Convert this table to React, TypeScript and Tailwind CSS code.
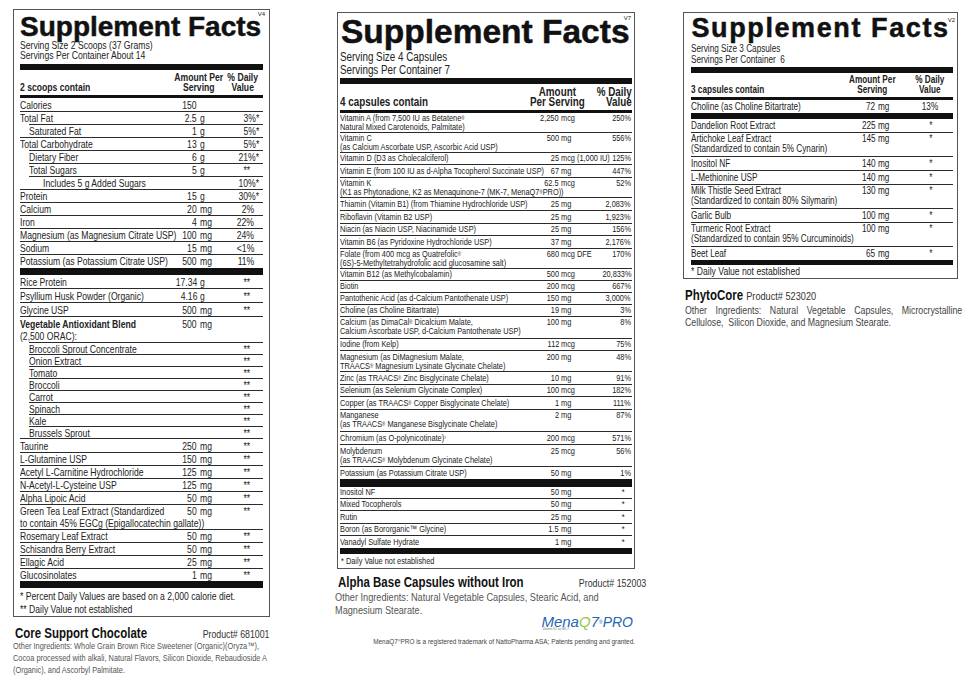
import type { ReactNode } from 'react'

const F = "font-['Liberation_Sans',Arial,sans-serif]"

// condensed text: Arial Narrow is not installed, so squeeze Liberation Sans
function T({ children, o = 'origin-left', className = '' }: { children: ReactNode; o?: string; className?: string }) {
  return <span className={`inline-block whitespace-nowrap scale-x-[0.82] ${o} ${className}`}>{children}</span>
}

function R({ c = '®' }: { c?: string }) {
  return <span className="text-[0.6em] align-top">{c}</span>
}

type Row = {
  n: ReactNode
  n2?: ReactNode
  a?: string
  u?: string
  dv?: string
  ind?: string
  tp?: string
  h?: string
  nb?: boolean
}

function lPad(dv: string) {
  if (dv === '**') return 'pr-[13px]'
  if (dv.endsWith('*')) return 'pr-[4px]'
  return 'pr-[9px]'
}

function LeftRow({ n, n2, a = '', u = '', dv = '', ind = '', tp = '', h = 'h-[12px]', nb }: Row) {
  return (
    <div className={`${ind} ${nb ? '' : 'border-t border-[#2b2b2b]'}`}>
      <div className={`flex items-center ${h} leading-[12px]`}>
        <div className={`flex-1 min-w-0 ${tp}`}><T>{n}</T></div>
        <div className="w-[28px] text-right"><T o="origin-right">{a}</T></div>
        <div className="w-[26px] pl-[3px]"><T>{u}</T></div>
        <div className={`w-[40px] text-right ${lPad(dv)}`}><T o="origin-right">{dv}</T></div>
      </div>
      {n2 && <div className="leading-[12px]"><T>{n2}</T></div>}
    </div>
  )
}

const left1: Row[] = [
  { n: 'Calories', a: '150', nb: true, h: 'h-[13px]' },
  { n: 'Total Fat', a: '2.5', u: 'g', dv: '3%*' },
  { n: 'Saturated Fat', a: '1', u: 'g', dv: '5%*', ind: 'ml-[9px]' },
  { n: 'Total Carbohydrate', a: '13', u: 'g', dv: '5%*' },
  { n: 'Dietary Fiber', a: '6', u: 'g', dv: '21%*', ind: 'ml-[9px]' },
  { n: 'Total Sugars', a: '5', u: 'g', dv: '**', ind: 'ml-[9px]' },
  { n: 'Includes 5 g Added Sugars', dv: '10%*', ind: 'ml-[9px]', tp: 'pl-[14px]' },
  { n: 'Protein', a: '15', u: 'g', dv: '30%*' },
  { n: 'Calcium', a: '20', u: 'mg', dv: '2%' },
  { n: 'Iron', a: '4', u: 'mg', dv: '22%' },
  { n: 'Magnesium (as Magnesium Citrate USP)', a: '100', u: 'mg', dv: '24%' },
  { n: 'Sodium', a: '15', u: 'mg', dv: '<1%' },
  { n: 'Potassium (as Potassium Citrate USP)', a: '500', u: 'mg', dv: '11%' },
]

const veg = ['Broccoli Sprout Concentrate', 'Onion Extract', 'Tomato', 'Broccoli', 'Carrot', 'Spinach', 'Kale', 'Brussels Sprout']

const left2: Row[] = [
  { n: 'Rice Protein', a: '17.34', u: 'g', dv: '**', nb: true, h: 'h-[13px]' },
  { n: 'Psyllium Husk Powder (Organic)', a: '4.16', u: 'g', dv: '**', h: 'h-[13px]' },
  { n: 'Glycine USP', a: '500', u: 'mg', dv: '**', h: 'h-[13px]' },
  { n: <span className="font-bold">Vegetable Antioxidant Blend</span>, n2: '(2,500 ORAC):', a: '500', u: 'mg', h: 'h-[13px]' },
  ...veg.map((v) => ({ n: v, dv: '**', ind: 'ml-[9px]', h: 'h-[11px]' })),
  { n: 'Taurine', a: '250', u: 'mg', dv: '**', h: 'h-[13px]' },
  { n: 'L-Glutamine USP', a: '150', u: 'mg', dv: '**' },
  { n: 'Acetyl L-Carnitine Hydrochloride', a: '125', u: 'mg', dv: '**' },
  { n: 'N-Acetyl-L-Cysteine USP', a: '125', u: 'mg', dv: '**' },
  { n: 'Alpha Lipoic Acid', a: '50', u: 'mg', dv: '**' },
  { n: 'Green Tea Leaf Extract (Standardized', n2: 'to contain 45% EGCg (Epigallocatechin gallate))', a: '50', u: 'mg', dv: '**' },
  { n: 'Rosemary Leaf Extract', a: '50', u: 'mg', dv: '**' },
  { n: 'Schisandra Berry Extract', a: '50', u: 'mg', dv: '**' },
  { n: 'Ellagic Acid', a: '25', u: 'mg', dv: '**' },
  { n: 'Glucosinolates', a: '1', u: 'mg', dv: '**' },
]

function LeftPanel() {
  return (
    <div className={`ml-[13px] mt-[9px] w-[257px] shrink-0 ${F}`}>
      <div className="relative border-[1.5px] border-[#555] px-[6px] text-[#222]">
        <span className="absolute right-[4px] top-[1px] text-[6px] leading-none">V4</span>
        <div className="pt-[4px] text-[28px] leading-[26px] font-bold text-[#111] whitespace-nowrap [-webkit-text-stroke:0.5px_#111]">Supplement Facts</div>
        <div className="text-[10.5px] leading-[10px]">
          <div><T>Serving Size 2 Scoops (37 Grams)</T></div>
          <div><T>Servings Per Container About 14</T></div>
        </div>
        <div className="mt-[4px] h-[6px] bg-[#111]" />
        <div className="flex items-end h-[25px] pb-[3px] text-[10.5px] leading-[10px] font-bold">
          <div className="flex-1"><T>2 scoops contain</T></div>
          <div className="w-[54px] pr-[3px] text-center"><T o="origin-center">Amount Per<br />Serving</T></div>
          <div className="w-[40px] text-center"><T o="origin-center">% Daily<br />Value</T></div>
        </div>
        <div className="h-[3px] bg-[#111]" />
        <div className="text-[10.5px]">
          {left1.map((r, i) => <LeftRow key={i} {...r} />)}
        </div>
        <div className="mt-[1px] h-[7px] bg-[#111]" />
        <div className="text-[10.5px]">
          {left2.map((r, i) => <LeftRow key={i} {...r} />)}
        </div>
        <div className="h-[7px] bg-[#111]" />
        <div className="text-[10.5px] leading-[13px] pt-[1.5px]">
          <div><T>* Percent Daily Values are based on a 2,000 calorie diet.</T></div>
          <div><T>** Daily Value not established</T></div>
        </div>
      </div>
      <div className="mt-[9px] flex items-baseline justify-between pl-[2px] pr-[1px] leading-[15px]">
        <T className="text-[14px] font-bold text-[#111]">Core Support Chocolate</T>
        <T o="origin-right" className="text-[10.7px] text-[#333]">Product# 681001</T>
      </div>
      <div className="-mt-[1.5px] text-[9px] leading-[12px] text-[#555]">
        <div><T>Other Ingredients: Whole Grain Brown Rice Sweetener (Organic)(Oryza™),</T></div>
        <div><T>Cocoa processed with alkali, Natural Flavors, Silicon Dioxide, Rebaudioside A</T></div>
        <div><T>(Organic), and Ascorbyl Palmitate.</T></div>
      </div>
    </div>
  )
}

function MidRow({ n, n2, a = '', u = '', dv = '', h = 'h-[12.5px]', nb }: Row) {
  const two = !!n2
  return (
    <div className={`${nb ? '' : 'border-t border-[#2b2b2b]'} ${two ? 'pt-[1.5px]' : ''} ${h}`}>
      <div className={`flex ${two ? 'leading-[9px]' : 'items-center h-full leading-[10px]'}`}>
        <div className="flex-1 min-w-0"><T>{n}</T></div>
        <div className="w-[40px] text-right"><T o="origin-right">{a}</T></div>
        <div className="w-[37px] pl-[2px]"><T>{u}</T></div>
        <div className={`w-[36px] text-right ${dv === '*' ? 'pr-[7px]' : 'pr-[1px]'}`}><T o="origin-right">{dv}</T></div>
      </div>
      {two && <div className="leading-[9px]"><T>{n2}</T></div>}
    </div>
  )
}

const mid1: Row[] = [
  { n: <>Vitamin A (from 7,500 IU as Betatene<R /></>, n2: 'Natural Mixed Carotenoids, Palmitate)', a: '2,250', u: 'mcg', dv: '250%', nb: true, h: 'h-[19px]' },
  { n: 'Vitamin C', n2: '(as Calcium Ascorbate USP, Ascorbic Acid USP)', a: '500', u: 'mg', dv: '556%', h: 'h-[20px]' },
  { n: 'Vitamin D (D3 as Cholecalciferol)', a: '25', u: 'mcg (1,000 IU)', dv: '125%' },
  { n: 'Vitamin E (from 100 IU as d-Alpha Tocopherol Succinate USP)', a: '67', u: 'mg', dv: '447%' },
  { n: 'Vitamin K', n2: <>(K1 as Phytonadione, K2 as Menaquinone-7 (MK-7, MenaQ7<R />PRO))</>, a: '62.5', u: 'mcg', dv: '52%', h: 'h-[20px]' },
  { n: 'Thiamin (Vitamin B1) (from Thiamine Hydrochloride USP)', a: '25', u: 'mg', dv: '2,083%', h: 'h-[13.5px]' },
  { n: 'Riboflavin (Vitamin B2 USP)', a: '25', u: 'mg', dv: '1,923%' },
  { n: 'Niacin (as Niacin USP, Niacinamide USP)', a: '25', u: 'mg', dv: '156%' },
  { n: 'Vitamin B6 (as Pyridoxine Hydrochloride USP)', a: '37', u: 'mg', dv: '2,176%' },
  { n: <>Folate (from 400 mcg as Quatrefolic<R /></>, n2: '(6S)-5-Methyltetrahydrofolic acid glucosamine salt)', a: '680', u: 'mcg DFE', dv: '170%', h: 'h-[20px]' },
  { n: 'Vitamin B12 (as Methylcobalamin)', a: '500', u: 'mcg', dv: '20,833%' },
  { n: 'Biotin', a: '200', u: 'mcg', dv: '667%', h: 'h-[11.5px]' },
  { n: 'Pantothenic Acid (as d-Calcium Pantothenate USP)', a: '150', u: 'mg', dv: '3,000%' },
  { n: 'Choline (as Choline Bitartrate)', a: '19', u: 'mg', dv: '3%', h: 'h-[11.5px]' },
  { n: <>Calcium (as DimaCal<R /> Dicalcium Malate,</>, n2: 'Calcium Ascorbate USP, d-Calcium Pantothenate USP)', a: '100', u: 'mg', dv: '8%', h: 'h-[22px]' },
  { n: 'Iodine (from Kelp)', a: '112', u: 'mcg', dv: '75%' },
  { n: 'Magnesium (as DiMagnesium Malate,', n2: <>TRAACS<R /> Magnesium Lysinate Glycinate Chelate)</>, a: '200', u: 'mg', dv: '48%', h: 'h-[21px]' },
  { n: <>Zinc (as TRAACS<R /> Zinc Bisglycinate Chelate)</>, a: '10', u: 'mg', dv: '91%' },
  { n: 'Selenium (as Selenium Glycinate Complex)', a: '100', u: 'mcg', dv: '182%' },
  { n: <>Copper (as TRAACS<R /> Copper Bisglycinate Chelate)</>, a: '1', u: 'mg', dv: '111%' },
  { n: 'Manganese', n2: <>(as TRAACS<R /> Manganese Bisglycinate Chelate)</>, a: '2', u: 'mg', dv: '87%', h: 'h-[22px]' },
  { n: <>Chromium (as O-polynicotinate)<R c="³" /></>, a: '200', u: 'mcg', dv: '571%', h: 'h-[13.5px]' },
  { n: 'Molybdenum', n2: <>(as TRAACS<R /> Molybdenum Glycinate Chelate)</>, a: '25', u: 'mcg', dv: '56%', h: 'h-[22px]' },
  { n: 'Potassium (as Potassium Citrate USP)', a: '50', u: 'mg', dv: '1%' },
]

const mid2: Row[] = [
  { n: 'Inositol NF', a: '50', u: 'mg', dv: '*', nb: true, h: 'h-[11px]' },
  { n: 'Mixed Tocopherols', a: '50', u: 'mg', dv: '*' },
  { n: 'Rutin', a: '25', u: 'mg', dv: '*' },
  { n: 'Boron (as Bororganic™ Glycine)', a: '1.5', u: 'mg', dv: '*' },
  { n: 'Vanadyl Sulfate Hydrate', a: '1', u: 'mg', dv: '*' },
]

function MidPanel() {
  return (
    <div className={`ml-[65px] mt-[12px] w-[301px] shrink-0 ${F}`}>
      <div className="relative ml-[2px] w-[298px] border-[1.5px] border-[#555] px-[2px] text-[#222]">
        <span className="absolute right-[3px] top-[2px] text-[6px] leading-none">V7</span>
        <div className="pt-[4px] pl-[1px] text-[33.5px] leading-[30px] font-bold text-[#111] whitespace-nowrap [-webkit-text-stroke:0.5px_#111]">Supplement Facts</div>
        <div className="mt-[4px] text-[12px] leading-[13px]">
          <div><T>Serving Size 4 Capsules</T></div>
          <div><T>Servings Per Container 7</T></div>
        </div>
        <div className="mt-[0.5px] h-[6px] bg-[#111]" />
        <div className="flex items-end h-[26px] pb-[3px] text-[12px] leading-[10px] font-bold">
          <div className="flex-1"><T>4 capsules contain</T></div>
          <div className="w-[62px] text-center"><T o="origin-center">Amount<br />Per Serving</T></div>
          <div className="w-[46px] text-right"><T o="origin-right">% Daily<br />Value</T></div>
        </div>
        <div className="h-[3px] bg-[#111]" />
        <div className="text-[9px]">
          {mid1.map((r, i) => <MidRow key={i} {...r} />)}
        </div>
        <div className="h-[8px] bg-[#111]" />
        <div className="text-[9px]">
          {mid2.map((r, i) => <MidRow key={i} {...r} />)}
        </div>
        <div className="h-[6px] bg-[#111]" />
        <div className="h-[14px] text-[9px] leading-[14px] pl-[1px]"><T>* Daily Value not established</T></div>
      </div>
      <div className="mt-[5px] flex items-baseline justify-between pl-[3px] pr-[1px] leading-[16px]">
        <T className="text-[14px] font-bold text-[#111]">Alpha Base Capsules without Iron</T>
        <T o="origin-right" className="text-[10.8px] text-[#333]">Product# 152003</T>
      </div>
      <div className="text-[11.2px] leading-[13px] text-[#555]">
        <div><T>Other Ingredients: Natural Vegetable Capsules, Stearic Acid, and</T></div>
        <div><T>Magnesium Stearate.</T></div>
      </div>
      <div className="-mt-[2.5px] flex justify-end pr-[3px]">
        <div className="relative leading-[16px] italic text-[15px] text-[#2466b1] whitespace-nowrap">
          Mena<span className="text-[#9cc84b]">Q</span>7<span className="not-italic text-[5px] align-top">®</span><span className="text-[14px]">PRO</span>
          <span className="absolute left-[1px] -bottom-[1px] not-italic text-[3px] leading-none text-[#777]">Vitamin K2 as MK-7</span>
        </div>
      </div>
      <div className="mt-[6.5px] pr-[1px] text-right text-[6.4px] leading-[9px] text-[#444] whitespace-nowrap">
        MenaQ7<R />PRO is a registered trademark of NattoPharma ASA; Patents pending and granted.
      </div>
    </div>
  )
}

function RightRow({ n, n2, a = '', u = '', dv = '', h = 'h-[13px]', nb }: Row) {
  const two = !!n2
  return (
    <div className={`${nb ? '' : 'border-t border-[#2b2b2b]'} ${two ? 'pt-[1px]' : ''} ${h}`}>
      <div className={`flex ${two ? 'leading-[10.5px]' : 'items-center h-full leading-[11px]'}`}>
        <div className="flex-1 min-w-0"><T>{n}</T></div>
        <div className="w-[30px] text-right"><T o="origin-right">{a}</T></div>
        <div className="w-[33px] pl-[2px]"><T>{u}</T></div>
        <div className="w-[44px] text-center"><T o="origin-center">{dv}</T></div>
      </div>
      {two && <div className="leading-[10.5px]"><T>{n2}</T></div>}
    </div>
  )
}

const right1: Row[] = [
  { n: 'Dandelion Root Extract', a: '225', u: 'mg', dv: '*', nb: true, h: 'h-[13px]' },
  { n: 'Artichoke Leaf Extract', n2: '(Standardized to contain 5% Cynarin)', a: '145', u: 'mg', dv: '*', h: 'h-[24px]' },
  { n: 'Inositol NF', a: '140', u: 'mg', dv: '*', h: 'h-[14px]' },
  { n: 'L-Methionine USP', a: '140', u: 'mg', dv: '*', h: 'h-[14px]' },
  { n: 'Milk Thistle Seed Extract', n2: '(Standardized to contain 80% Silymarin)', a: '130', u: 'mg', dv: '*', h: 'h-[24px]' },
  { n: 'Garlic Bulb', a: '100', u: 'mg', dv: '*', h: 'h-[14px]' },
  { n: 'Turmeric Root Extract', n2: '(Standardized to contain 95% Curcuminoids)', a: '100', u: 'mg', dv: '*', h: 'h-[24px]' },
  { n: 'Beet Leaf', a: '65', u: 'mg', dv: '*', h: 'h-[14px]' },
]

function RightPanel() {
  return (
    <div className={`ml-[47px] mt-[12px] w-[279px] shrink-0 ${F}`}>
      <div className="relative w-[275px] border-[1.5px] border-[#555] pl-[6.5px] pr-[4.5px] text-[#222]">
        <span className="absolute right-[2px] top-[4px] text-[6px] leading-none">V2</span>
        <div className="pt-[2.5px] pl-[1px] text-[27px] leading-[24px] tracking-[1.6px] font-bold text-[#111] whitespace-nowrap [-webkit-text-stroke:0.5px_#111]">Supplement Facts</div>
        <div className="mt-[3.5px] text-[10px] leading-[11px]">
          <div><T>Serving Size 3 Capsules</T></div>
          <div><T>Servings Per Container&nbsp; 6</T></div>
        </div>
        <div className="mt-[1.5px] h-[6px] bg-[#111]" />
        <div className="flex items-end h-[24px] pb-[2px] text-[10px] leading-[10px] font-bold">
          <div className="flex-1"><T>3 capsules contain</T></div>
          <div className="w-[58px] text-center"><T o="origin-center">Amount Per<br />Serving</T></div>
          <div className="w-[51px] pl-[6px] text-center"><T o="origin-center">% Daily<br />Value</T></div>
        </div>
        <div className="h-[3px] bg-[#111]" />
        <div className="text-[10px]">
          <RightRow n="Choline (as Choline Bitartrate)" a="72" u="mg" dv="13%" nb />
        </div>
        <div className="h-[6px] bg-[#111]" />
        <div className="text-[10px]">
          {right1.map((r, i) => <RightRow key={i} {...r} />)}
        </div>
        <div className="h-[5px] bg-[#111]" />
        <div className="h-[13.5px] text-[10.5px] leading-[13px]"><T>* Daily Value not established</T></div>
      </div>
      <div className="mt-[8px] leading-[16px] pl-[2px]">
        <T className="text-[14px] font-bold text-[#111]">PhytoCore <span className="text-[11.2px] font-normal text-[#333]">Product# 523020</span></T>
      </div>
      <div className="pl-[2px] text-[10.7px] leading-[12px] text-[#444]">
        <div>
          <span className="inline-block w-[338px] scale-x-[0.82] origin-left text-justify [text-align-last:justify]">Other Ingredients: Natural Vegetable Capsules, Microcrystalline</span>
        </div>
        <div><T>Cellulose,&nbsp; Silicon Dioxide, and Magnesium Stearate.</T></div>
      </div>
    </div>
  )
}

export default function App() {
  return (
    <div className="flex items-start w-[971px] h-[682px] overflow-hidden bg-white">
      <LeftPanel />
      <MidPanel />
      <RightPanel />
    </div>
  )
}
